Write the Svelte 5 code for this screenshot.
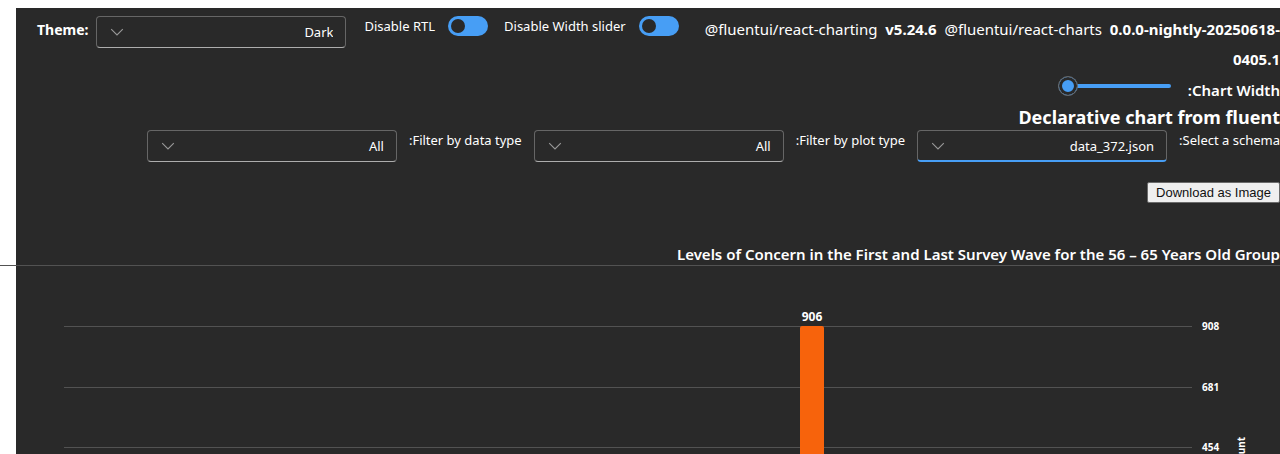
<script>
  let theme = $state('Dark');
  let rtlOff = $state(true);
  let sliderOff = $state(true);
  let chartWidth = $state(100);
  let filters = $state([
    { id: 'schema', label: 'Select a schema:', value: 'data_372.json', active: true },
    { id: 'plot', label: 'Filter by plot type:', value: 'All', active: false },
    { id: 'data', label: 'Filter by data type:', value: 'All', active: false }
  ]);

  let width = $state(1264);
  const ticks = [
    { value: 908, y: 61 },
    { value: 681, y: 122 },
    { value: 454, y: 182 },
    { value: 227, y: 243 },
    { value: 0, y: 304 }
  ];
  let plotEnd = $derived(width - 88);
  let barX = $derived(Math.round(48 + (plotEnd - 48) * 0.6525));
</script>

{#snippet chevron()}
  <svg class="chevron" width="20" height="20" viewBox="0 0 20 20" aria-hidden="true">
    <path d="M4.2 7.2 L10 13 L15.8 7.2" fill="none" stroke="#999" stroke-width="1.1" />
  </svg>
{/snippet}

<div class="app">
  <main class="page">
    <header>
      <div class="controls">
        <label class="theme" for="theme">Theme:</label>
        <div class="dropdown" dir="rtl">
          <select id="theme" bind:value={theme}>
            <option>Dark</option>
            <option>Light</option>
          </select>
          {@render chevron()}
        </div>
        <label class="toggle first">Disable RTL <input type="checkbox" role="switch" bind:checked={rtlOff} /></label>
        <label class="toggle">Disable Width slider <input type="checkbox" role="switch" bind:checked={sliderOff} /></label>
      </div>
      <p class="versions">
        @fluentui/react-charting&nbsp; <b>v5.24.6</b>&nbsp; @fluentui/react-charts&nbsp; <b>0.0.0-nightly-20250618-0405.1</b>
      </p>
    </header>

    <div class="width-row" dir="rtl">
      <label for="width">Chart Width:</label>
      <input id="width" type="range" min="0" max="100" bind:value={chartWidth} />
    </div>

    <h2 dir="rtl">Declarative chart from fluent</h2>

    <div class="filters" dir="rtl">
      {#each filters as f (f.id)}
        <label for={f.id}>{f.label}</label>
        <div class="dropdown" class:active={f.active}>
          <select id={f.id} bind:value={f.value}>
            <option>{f.value}</option>
          </select>
          {@render chevron()}
        </div>
      {/each}
    </div>

    <div class="actions" dir="rtl"><button type="button">Download as Image</button></div>

    <h3 dir="rtl">Levels of Concern in the First and Last Survey Wave for the 56 – 65 Years Old Group</h3>

    <div class="chart" bind:clientWidth={width}>
      <svg {width} height="320" role="img" aria-label="Bar chart">
        <line x1="-16" x2={width} y1="0.5" y2="0.5" />
        {#each ticks as t (t.value)}
          <line x1="48" x2={plotEnd} y1={t.y + 0.5} y2={t.y + 0.5} />
          <text class="tick" x={plotEnd + 10} y={t.y + 4}>{t.value}</text>
        {/each}
        <rect x={barX} y="61" width="24" height="243" rx="2" />
        <text class="value" x={barX + 12} y="56" text-anchor="middle">906</text>
        <text class="tick" transform="translate({width - 35} 172) rotate(-90)" text-anchor="end">Count</text>
      </svg>
    </div>
  </main>
</div>

<style>
  :global(body) {
    background: #fff;
  }
  .app {
    box-sizing: border-box;
    height: 100vh;
    overflow: hidden;
    padding: 8px 0 0 16px;
    font-family: "Noto Sans", "Open Sans", sans-serif;
    font-size: 13px;
    line-height: 20px;
    color: #fff;
  }
  .page {
    min-height: 100%;
    background: #292929;
  }
  header {
    display: flex;
    align-items: flex-start;
    padding: 6px 0 2px 21px;
  }
  .controls {
    display: flex;
    flex: none;
    align-items: flex-start;
    padding-top: 2px;
  }
  .theme {
    font-size: 14px;
    font-weight: 700;
    line-height: 28px;
    margin-right: 8px;
  }
  .dropdown {
    display: grid;
    flex: none;
    width: 250px;
    align-items: center;
  }
  select {
    grid-area: 1 / 1;
    appearance: none;
    box-sizing: border-box;
    width: 100%;
    height: 32px;
    margin: 0;
    padding: 0 12px;
    border: 1px solid #666;
    border-bottom-color: #adadad;
    border-radius: 4px;
    background: #292929;
    color: #fff;
    font: inherit;
  }
  .active select {
    border-bottom: 2px solid #479ef5;
  }
  .chevron {
    grid-area: 1 / 1;
    justify-self: end;
    margin-left: 11px;
    pointer-events: none;
  }
  .toggle {
    display: flex;
    flex: none;
    gap: 13px;
    margin-right: 16px;
  }
  .first {
    margin-left: 18px;
  }
  .toggle input {
    appearance: none;
    width: 40px;
    height: 20px;
    margin: 0;
    border-radius: 10px;
    background: #479ef5;
  }
  .toggle input::before {
    content: "";
    display: block;
    width: 14px;
    height: 14px;
    margin: 3px;
    border-radius: 50%;
    background: #292929;
  }
  .versions {
    flex: 1;
    margin: 0;
    font-size: 15px;
    line-height: 30px;
    text-align: right;
  }
  b {
    font-weight: 700;
  }
  .width-row {
    display: flex;
    align-items: flex-start;
    gap: 17px;
    padding-bottom: 1px;
    font-size: 15px;
    font-weight: 600;
    line-height: 28px;
  }
  .width-row input {
    appearance: none;
    width: 113px;
    height: 20px;
    margin: 0;
    background: transparent;
  }
  .width-row input::-webkit-slider-runnable-track {
    height: 4px;
    border-radius: 2px;
    background: #479ef5;
  }
  .width-row input::-webkit-slider-thumb {
    appearance: none;
    box-sizing: border-box;
    width: 20px;
    height: 20px;
    margin-top: -8px;
    border: 1px solid #666;
    border-radius: 50%;
    background: #479ef5;
    box-shadow: inset 0 0 0 3px #292929;
  }
  h2 {
    margin: 0 0 1px;
    font-size: 18px;
    font-weight: 700;
    line-height: 24px;
  }
  .filters {
    display: flex;
    align-items: flex-start;
    gap: 12px;
  }
  .filters label {
    white-space: nowrap;
  }
  .actions {
    display: flex;
    margin-top: 20px;
  }
  button {
    height: 21px;
    padding: 0 8px;
    border: 1px solid #6b6b6b;
    border-radius: 2px;
    background: #efefef;
    color: #111;
    font: 13px "Liberation Sans", Arial, sans-serif;
  }
  h3 {
    margin: 40px 0 0;
    font-size: 15px;
    font-weight: 600;
    line-height: 22px;
  }
  .chart svg {
    display: block;
    overflow: visible;
  }
  line {
    stroke: #525252;
  }
  rect {
    fill: #f7630c;
  }
  text {
    fill: #fff;
    font-weight: 700;
  }
  .tick {
    font-size: 10px;
  }
  .value {
    font-size: 12px;
  }
</style>
